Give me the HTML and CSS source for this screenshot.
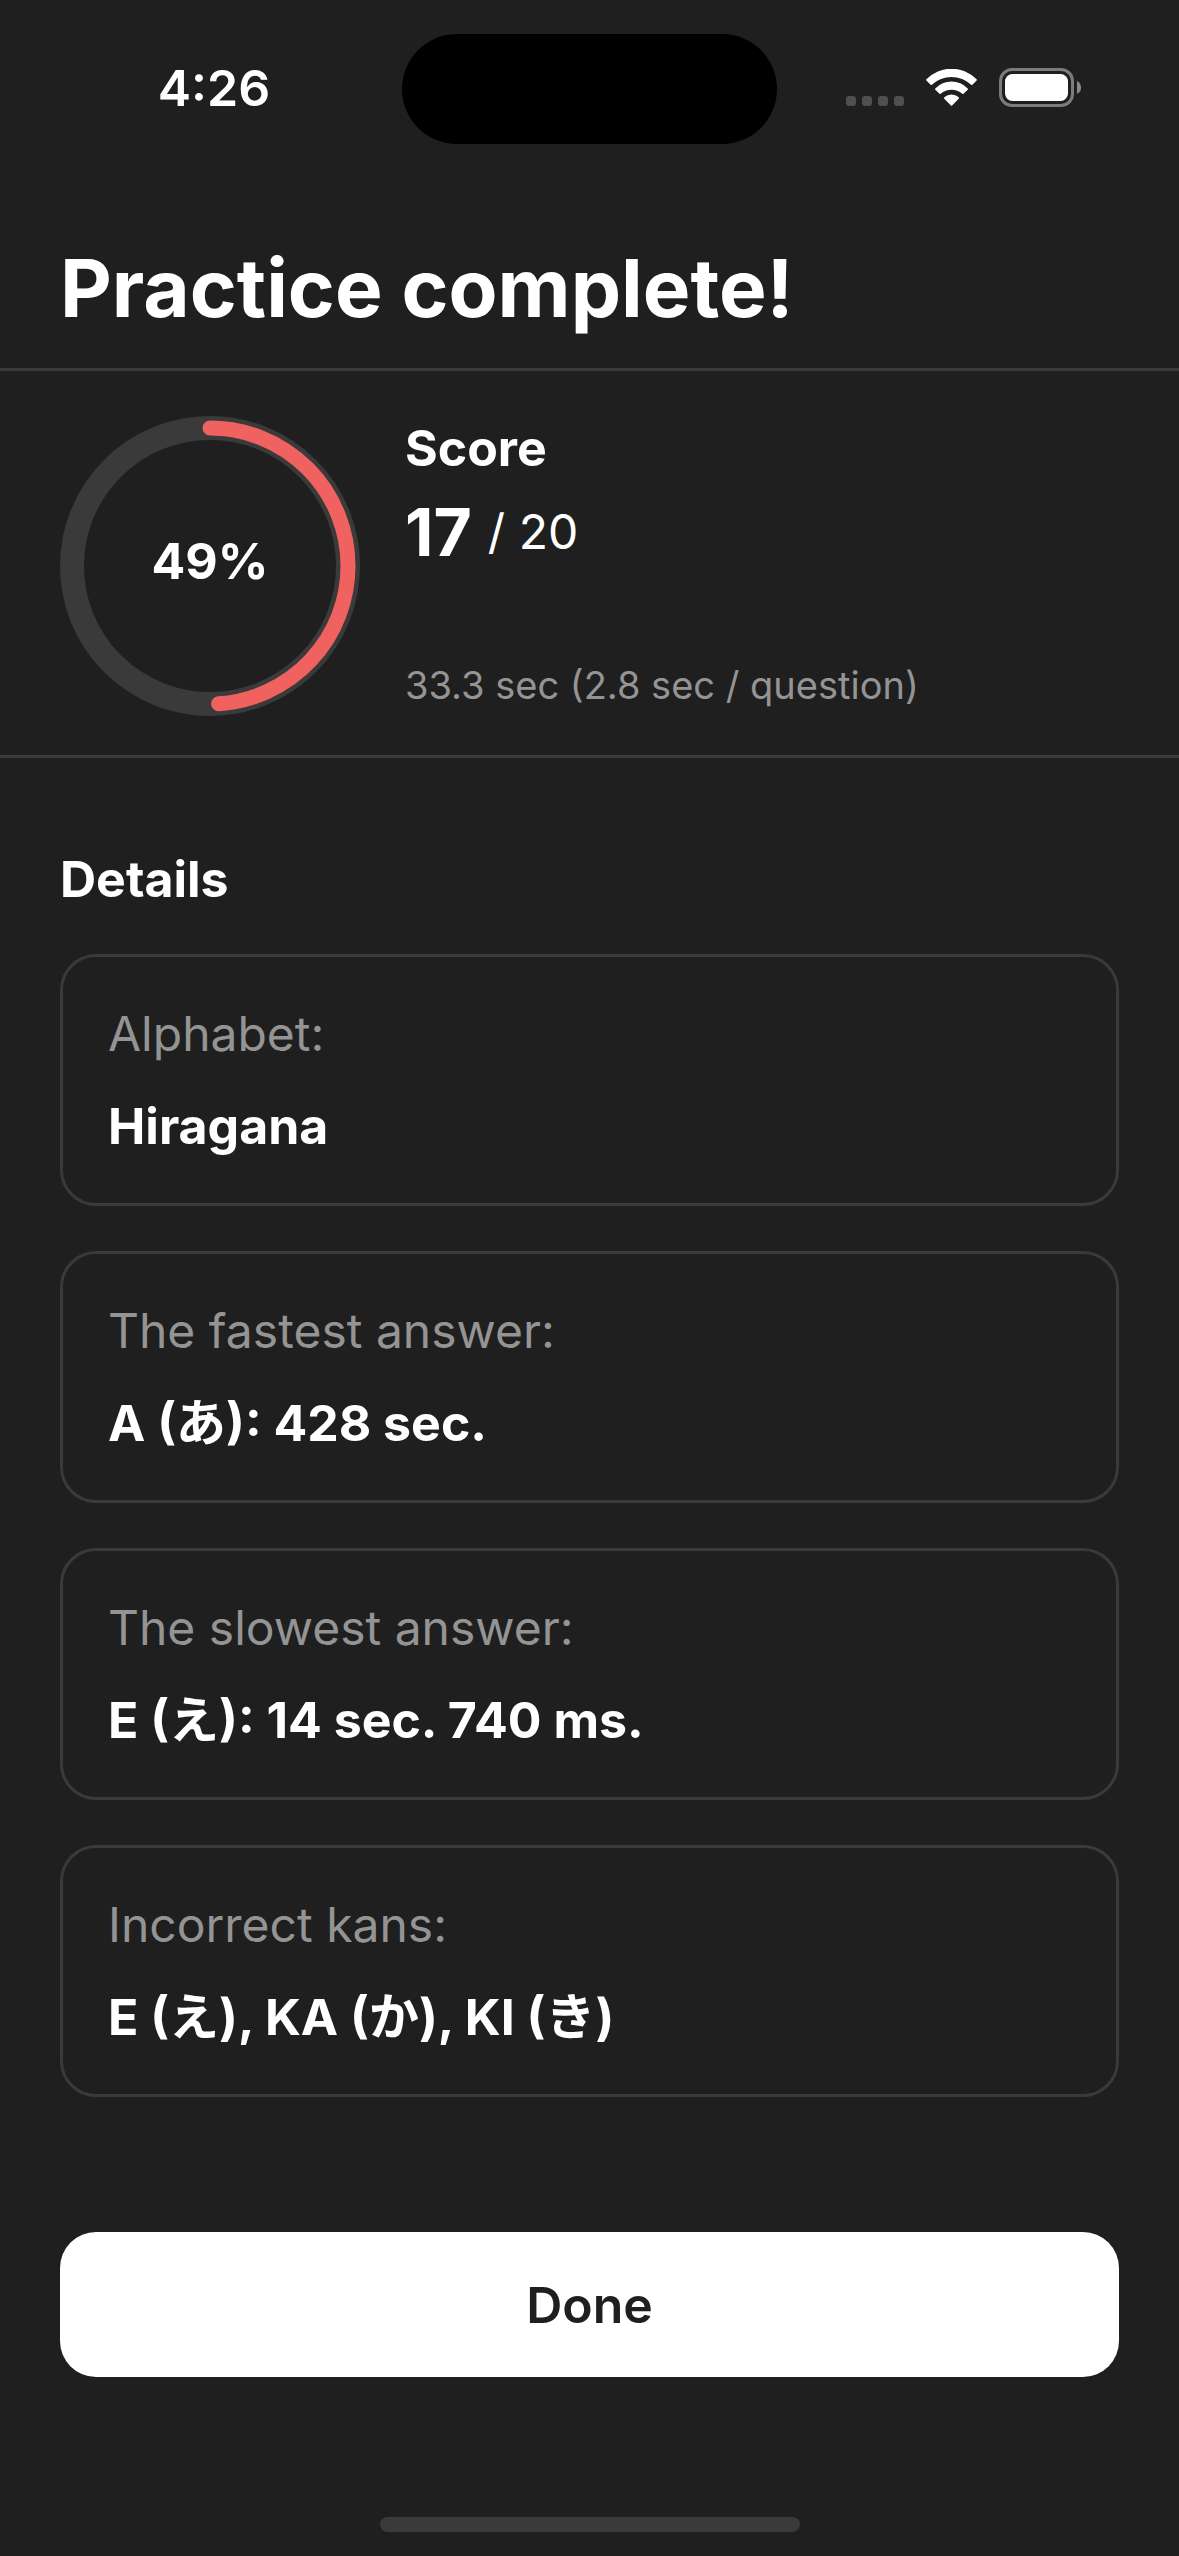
FILE: index.html
```html
<!DOCTYPE html>
<html lang="en">
<head>
  <meta charset="utf-8">
  <meta name="viewport" content="width=device-width, initial-scale=1">
  <title>Practice complete</title>
  <link rel="stylesheet" href="styles.css">
</head>
<body>
  <div class="status-bar">
    <time class="status-time">4:26</time>
    <div class="island"></div>
    <div class="status-icons">
      <svg class="icon-signal" viewBox="0 0 58 10" aria-label="No signal">
        <rect width="10" height="10" rx="3"/>
        <rect x="16" width="10" height="10" rx="3"/>
        <rect x="32" width="10" height="10" rx="3"/>
        <rect x="48" width="10" height="10" rx="3"/>
      </svg>
      <svg class="icon-wifi" viewBox="0 0 51 37" aria-label="Wi-Fi">
        <path d="M.4 10.3A35 35 0 0 1 50.6 10.3Q51.2 11 50.6 11.6L46.4 15.8Q45.9 16.3 45.2 15.7A29 29 0 0 0 5.8 15.7Q5.1 16.3 4.6 15.8L.4 11.6Q-.2 11 .4 10.3Z"/>
        <path d="M9.3 19.4A22.5 22.5 0 0 1 41.7 19.4Q42.3 20.1 41.7 20.7L37.5 24.8Q37 25.3 36.3 24.7A16.4 16.4 0 0 0 14.7 24.7Q14 25.3 13.5 24.8L9.3 20.7Q8.7 20.1 9.3 19.4Z"/>
        <path d="M18.3 28.3A10.8 10.8 0 0 1 32.7 28.3Q33.4 29 32.7 29.7L26.1 36.4Q25.5 37 24.9 36.4L18.3 29.7Q17.6 29 18.3 28.3Z"/>
      </svg>
      <svg class="icon-battery" viewBox="0 0 82 39" aria-label="Battery full">
        <rect class="battery-shell" x="1.5" y="1.5" width="72" height="36" rx="11.5"/>
        <rect class="battery-level" x="6" y="6" width="63" height="27" rx="7.5"/>
        <path class="battery-tip" d="M78 13Q82 15 82 19.5T78 26Z"/>
      </svg>
    </div>
  </div>

  <header class="page-header">
    <h1 class="page-title">Practice complete!</h1>
  </header>

  <main class="main">
    <section class="summary">
      <div class="ring">
        <svg class="ring-chart" viewBox="0 0 300 300" aria-hidden="true">
          <circle class="ring-track" cx="150" cy="150" r="138"/>
          <circle class="ring-value" cx="150" cy="150" r="138" pathLength="100" stroke-dasharray="49 100" transform="rotate(-90 150 150)"/>
        </svg>
        <span class="ring-label">49%</span>
      </div>
      <div class="score">
        <h2 class="heading">Score</h2>
        <p class="score-value"><strong class="score-count">17</strong><span class="score-total">/ 20</span></p>
        <p class="score-time">33.3 sec (2.8 sec / question)</p>
      </div>
    </section>

    <section class="details">
      <h2 class="heading">Details</h2>
      <dl class="cards">
        <div class="card">
          <dt class="card-label">Alphabet:</dt>
          <dd class="card-value">Hiragana</dd>
        </div>
        <div class="card">
          <dt class="card-label">The fastest answer:</dt>
          <dd class="card-value">A (<span lang="ja">あ</span>): 428 sec.</dd>
        </div>
        <div class="card">
          <dt class="card-label">The slowest answer:</dt>
          <dd class="card-value">E (<span lang="ja">え</span>): 14 sec. 740 ms.</dd>
        </div>
        <div class="card">
          <dt class="card-label">Incorrect kans:</dt>
          <dd class="card-value">E (<span lang="ja">え</span>), KA (<span lang="ja">か</span>), KI (<span lang="ja">き</span>)</dd>
        </div>
      </dl>
    </section>
  </main>

  <footer class="footer">
    <button class="done-button" type="button">Done</button>
    <div class="home-indicator"></div>
  </footer>
</body>
</html>
```
FILE: styles.css
```css
:root {
  --bg: #1f1f1f;
  --line: #3a3a3a;
  --text: #ffffff;
  --muted: #949494;
  --accent: #f0625f;
  --gutter: 60px;
}

* {
  box-sizing: border-box;
  margin: 0;
}

body {
  display: flex;
  flex-direction: column;
  min-height: 100vh;
  background: var(--bg);
  color: var(--text);
  font-family: Inter, "Noto Sans CJK JP", sans-serif;
  font-size: 50px;
  line-height: 64px;
}

/* Status bar */
.status-bar {
  display: grid;
  grid-template-columns: 1fr 375px 1fr;
  align-items: center;
  padding: 34px 0 33px;
}

.status-time {
  padding: 0 0 3px 26px;
  text-align: center;
  font-weight: 600;
}

.island {
  height: 110px;
  border-radius: 55px;
  background: #000000;
}

.status-icons {
  display: flex;
  align-items: flex-end;
  justify-content: flex-end;
  gap: 22px;
  padding: 0 98px 3px 0;
}

.icon-signal {
  width: 58px;
  height: 10px;
  margin-bottom: 1px;
  fill: #4f4f4f;
}

.icon-wifi {
  width: 51px;
  height: 37px;
  margin-bottom: 1px;
  fill: var(--text);
}

.icon-battery {
  width: 82px;
  height: 39px;
}

.battery-shell {
  fill: none;
  stroke: #7c7c7c;
  stroke-width: 3;
}

.battery-level {
  fill: var(--text);
}

.battery-tip {
  fill: #8a8a8a;
}

/* Header */
.page-header {
  padding: 60px var(--gutter) 29px;
  border-bottom: 3px solid var(--line);
}

.page-title {
  font-size: 80px;
  font-weight: 700;
  line-height: 102px;
}

.heading {
  font-size: 50px;
  font-weight: 700;
}

/* Score summary */
.summary {
  display: flex;
  gap: 45px;
  padding: 45px var(--gutter) 39px;
  border-bottom: 3px solid var(--line);
}

.ring {
  display: grid;
  flex: none;
  width: 300px;
  height: 300px;
}

.ring-chart,
.ring-label {
  grid-area: 1 / 1;
}

.ring-chart {
  width: 100%;
  height: 100%;
  fill: none;
}

.ring-track {
  stroke: var(--line);
  stroke-width: 24;
}

.ring-value {
  stroke: var(--accent);
  stroke-width: 15;
  stroke-linecap: round;
}

.ring-label {
  place-self: center;
  padding-bottom: 10px;
  font-weight: 700;
}

.score {
  display: flex;
  flex: 1;
  flex-direction: column;
}

.score-value {
  display: flex;
  gap: 16px;
  margin-top: 12px;
  line-height: 80px;
}

.score-count {
  font-size: 66px;
  font-weight: 700;
}

.score-total {
  font-size: 48px;
}

.score-time {
  margin-top: auto;
  color: var(--muted);
  font-size: 38px;
  line-height: 62px;
}

/* Details */
.details {
  padding: 89px var(--gutter) 0;
}

.cards {
  display: grid;
  gap: 45px;
  margin-top: 43px;
}

.card {
  display: grid;
  gap: 28px;
  padding: 45px;
  border: 3px solid var(--line);
  border-radius: 36px;
}

.card-label {
  color: var(--muted);
  font-size: 48px;
}

.card-value {
  font-weight: 700;
}

/* Footer */
.footer {
  display: flex;
  flex: 1;
  flex-direction: column;
  align-items: center;
  padding: 135px var(--gutter) 24px;
}

.done-button {
  width: 100%;
  height: 145px;
  border: 0;
  border-radius: 36px;
  background: #ffffff;
  color: var(--bg);
  font: inherit;
  font-weight: 600;
}

.home-indicator {
  width: 420px;
  height: 15px;
  margin-top: auto;
  border-radius: 8px;
  background: #3a3a3a;
}
```
